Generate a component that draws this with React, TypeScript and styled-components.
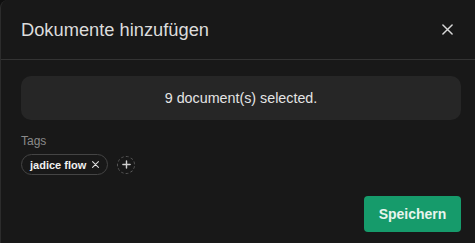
import styled, { createGlobalStyle } from "styled-components";

const GlobalStyle = createGlobalStyle`
  html,
  body {
    margin: 0;
    padding: 0;
    background: #0f0f0f;
    font-family: "Liberation Sans", Arial, sans-serif;
  }

  * {
    box-sizing: border-box;
  }
`;

const Dialog = styled.div`
  width: 475px;
  height: 243px;
  background: #181818;
  border-left: 1px solid #2c2c2c;
  border-top-left-radius: 8px;
  display: flex;
  flex-direction: column;
  color: #e2e2e2;
`;

const Header = styled.div`
  height: 60px;
  display: flex;
  align-items: center;
  justify-content: space-between;
  padding: 0 20px 0 20px;
  border-bottom: 1px solid #333;
`;

const Title = styled.h2`
  margin: 0;
  font-size: 18.3px;
  font-weight: 400;
  color: #dcdcdc;
`;

const CloseButton = styled.button`
  background: none;
  border: none;
  padding: 0;
  width: 16px;
  height: 16px;
  display: grid;
  place-items: center;
  cursor: pointer;
`;

const Body = styled.div`
  flex: 1;
  padding: 16px 14px 0 20px;
  display: flex;
  flex-direction: column;
`;

const Summary = styled.div`
  height: 44px;
  border-radius: 10px;
  background: #262626;
  display: flex;
  align-items: center;
  justify-content: center;
  font-size: 14.3px;
  color: #e4e4e4;
`;

const Label = styled.div`
  margin-top: 14px;
  font-size: 12px;
  color: #8a8a8a;
`;

const TagRow = styled.div`
  margin-top: 6px;
  display: flex;
  align-items: center;
  gap: 9px;
`;

const Tag = styled.span`
  height: 21px;
  padding: 0 8px 0 8px;
  border: 1px solid #444;
  border-radius: 11px;
  display: inline-flex;
  align-items: center;
  gap: 6px;
  font-size: 11px;
  font-weight: 700;
  color: #f0f0f0;
`;

const AddTag = styled.button<{ $size: number }>`
  width: ${(p) => p.$size}px;
  height: ${(p) => p.$size}px;
  border-radius: 50%;
  border: 1px dashed #5a5a5a;
  background: none;
  padding: 0;
  display: grid;
  place-items: center;
`;

const Footer = styled.div`
  display: flex;
  justify-content: flex-end;
  padding: 0 14px 11px 0;
`;

const SaveButton = styled.button`
  width: 97px;
  height: 36px;
  border: none;
  border-radius: 4px;
  background: #169b6b;
  color: #e8f5ee;
  font-family: inherit;
  font-size: 14px;
  font-weight: 700;
`;

const Cross = ({ size, color, width }: { size: number; color: string; width: number }) => (
  <svg width={size} height={size} viewBox="0 0 12 12">
    <path d="M1 1L11 11M11 1L1 11" stroke={color} strokeWidth={width} strokeLinecap="round" />
  </svg>
);

export default function App() {
  return (
    <>
      <GlobalStyle />
      <Dialog>
        <Header>
          <Title>Dokumente hinzufügen</Title>
          <CloseButton>
            <Cross size={11} color="#d8d8d8" width={1.6} />
          </CloseButton>
        </Header>
        <Body>
          <Summary>9 document(s) selected.</Summary>
          <Label>Tags</Label>
          <TagRow>
            <Tag>
              jadice flow
              <Cross size={7} color="#e0e0e0" width={1.8} />
            </Tag>
            <AddTag $size={18}>
              <svg width="9" height="9" viewBox="0 0 10 10">
                <path d="M5 1V9M1 5H9" stroke="#d0d0d0" strokeWidth="1.6" strokeLinecap="round" />
              </svg>
            </AddTag>
          </TagRow>
        </Body>
        <Footer>
          <SaveButton>Speichern</SaveButton>
        </Footer>
      </Dialog>
    </>
  );
}
